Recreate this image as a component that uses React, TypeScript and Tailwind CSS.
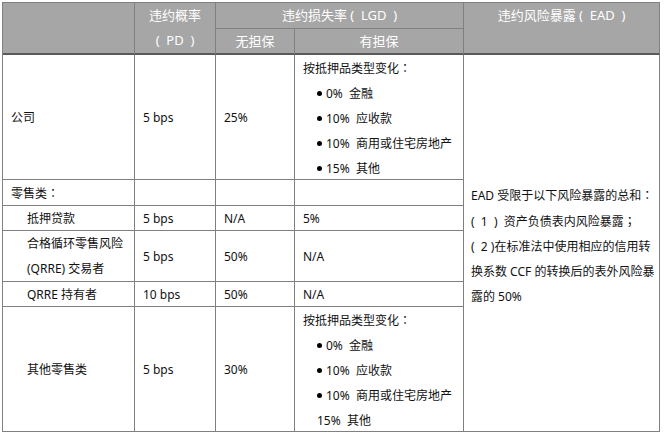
import React from 'react';

const line = 'border-r border-b border-[#808080]';
const head = 'border-r border-[#808080] bg-[#a6a6a6] text-white text-[13px] leading-[25px] text-center';
const headBottom = 'border-b-2 border-b-[#5a5a5a]';
const cell = `${line} flex flex-col justify-center px-[8px] leading-[25px]`;

// centred full-width punctuation, as in the source rendering
const P = ({ children }: { children: React.ReactNode }) => (
  <span className="font-['Noto_Sans_CJK_TC',sans-serif]">{children}</span>
);

const Bullet = ({ children }: { children: React.ReactNode }) => (
  <div className="flex items-center pl-[14px]">
    <span className="inline-block w-[5px] h-[5px] rounded-full bg-black mr-[4px]" />
    <span>{children}</span>
  </div>
);

const CollateralList = ({ lastBullet = true }: { lastBullet?: boolean }) => (
  <div className={`${line} px-[8px] leading-[25px]`}>
    <div>按抵押品类型变化<P>：</P></div>
    <Bullet>0%&nbsp; 金融</Bullet>
    <Bullet>10%&nbsp; 应收款</Bullet>
    <Bullet>10%&nbsp; 商用或住宅房地产</Bullet>
    {lastBullet ? (
      <Bullet>15%&nbsp; 其他</Bullet>
    ) : (
      <div className="pl-[14px]">15%&nbsp; 其他</div>
    )}
  </div>
);

const rows = [
  { name: '抵押贷款', pd: '5 bps', un: 'N/A', sec: '5%' },
  { name: ['合格循环零售风险', '(QRRE) 交易者'], pd: '5 bps', un: '50%', sec: 'N/A' },
  { name: 'QRRE 持有者', pd: '10 bps', un: '50%', sec: 'N/A' },
];

export default function App() {
  return (
    <div className="bg-white w-[664px] h-[435px] pt-[2px] pl-[2px] text-[12px] text-[#111] font-['Noto_Sans','Noto_Sans_CJK_SC',sans-serif]">
      <div className="grid w-fit border-l border-t border-[#808080] grid-cols-[132px_81px_79px_169px_196px] grid-rows-[26px_26px_125px_26px_25px_51px_25px_125px]">
        {/* header */}
        <div className={`${head} ${headBottom} row-span-2`} />
        <div className={`${head} ${headBottom} row-span-2`}>
          <div>违约概率</div>
          <div>(&nbsp; PD&nbsp; )</div>
        </div>
        <div className={`${head} border-b col-span-2`}>违约损失率&nbsp;(&nbsp; LGD&nbsp; )</div>
        <div className={`${head} ${headBottom} row-span-2`}>违约风险暴露&nbsp;(&nbsp; EAD&nbsp; )</div>
        <div className={`${head} ${headBottom} flex items-center justify-center`}>无担保</div>
        <div className={`${head} ${headBottom} flex items-center justify-center`}>有担保</div>

        {/* 公司 */}
        <div className={cell}>公司</div>
        <div className={cell}>5 bps</div>
        <div className={cell}>25%</div>
        <CollateralList />
        <div className={`${line} row-span-6 flex flex-col justify-center pl-[7px] pt-[5px] leading-[25px] whitespace-nowrap`}>
          <div>EAD 受限于以下风险暴露的总和<P>：</P></div>
          <div>(&nbsp; 1&nbsp; )&nbsp; 资产负债表内风险暴露<P>；</P></div>
          <div>(&nbsp; 2&nbsp;)在标准法中使用相应的信用转</div>
          <div>换系数 CCF 的转换后的表外风险暴</div>
          <div>露的 50%</div>
        </div>

        {/* 零售类 */}
        <div className={cell}>
          <div>零售类<P>：</P></div>
        </div>
        <div className={cell} />
        <div className={cell} />
        <div className={cell} />

        {rows.map((r, i) => (
          <React.Fragment key={i}>
            <div className={`${cell} pl-[24px]`}>
              {Array.isArray(r.name) ? r.name.map(n => <div key={n}>{n}</div>) : r.name}
            </div>
            <div className={cell}>{r.pd}</div>
            <div className={cell}>{r.un}</div>
            <div className={cell}>{r.sec}</div>
          </React.Fragment>
        ))}

        {/* 其他零售类 */}
        <div className={`${cell} pl-[24px]`}>其他零售类</div>
        <div className={cell}>5 bps</div>
        <div className={cell}>30%</div>
        <CollateralList lastBullet={false} />
      </div>
    </div>
  );
}
